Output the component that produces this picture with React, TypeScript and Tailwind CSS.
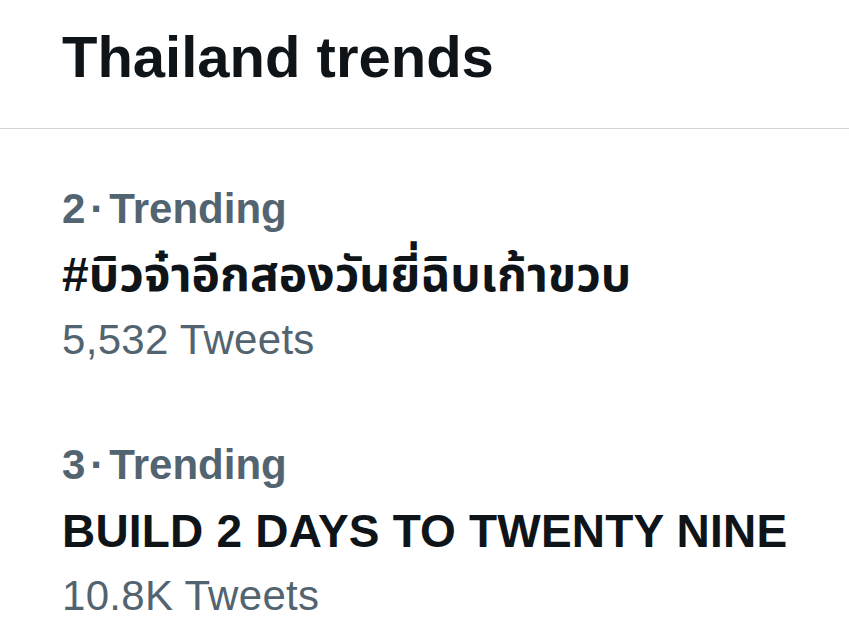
import React from 'react';

interface Trend {
  rank: number;
  name: string;
  count: string;
  thai?: boolean;
}

const trends: Trend[] = [
  { rank: 2, name: '#บิวจ๋าอีกสองวันยี่ฉิบเก้าขวบ', count: '5,532 Tweets', thai: true },
  { rank: 3, name: 'BUILD 2 DAYS TO TWENTY NINE', count: '10.8K Tweets' },
];

const TrendRow: React.FC<{ trend: Trend }> = ({ trend }) => (
  <div className="pt-[56px] pb-[20px] px-[62px]">
    <div className="text-[42px] leading-[48px] font-bold text-[#536471] flex">
      <span>{trend.rank}</span>
      <span className="mx-[5px]">·</span>
      <span>Trending</span>
    </div>
    <div
      className={`mt-[14px] leading-[56px] font-bold text-[#0f1419] whitespace-nowrap ${
        trend.thai ? 'text-[48px]' : 'text-[46px] tracking-[0.2px]'
      }`}
    >
      {trend.name}
    </div>
    <div className="mt-[12px] text-[42px] leading-[50px] text-[#536471] tracking-[0.3px]">{trend.count}</div>
  </div>
);

export default function App() {
  return (
    <div
      className="w-[849px] h-[636px] overflow-hidden bg-white"
      style={{ fontFamily: '"Liberation Sans", "Noto Sans Thai", "Noto Sans", sans-serif' }}
    >
      <div className="pt-[23px] pb-[37px] px-[62px] border-b border-[#d4d4d4]">
        <h1 className="text-[58px] leading-[68px] font-bold text-[#0f1419]">Thailand trends</h1>
      </div>
      {trends.map((t) => (
        <TrendRow key={t.rank} trend={t} />
      ))}
    </div>
  );
}
